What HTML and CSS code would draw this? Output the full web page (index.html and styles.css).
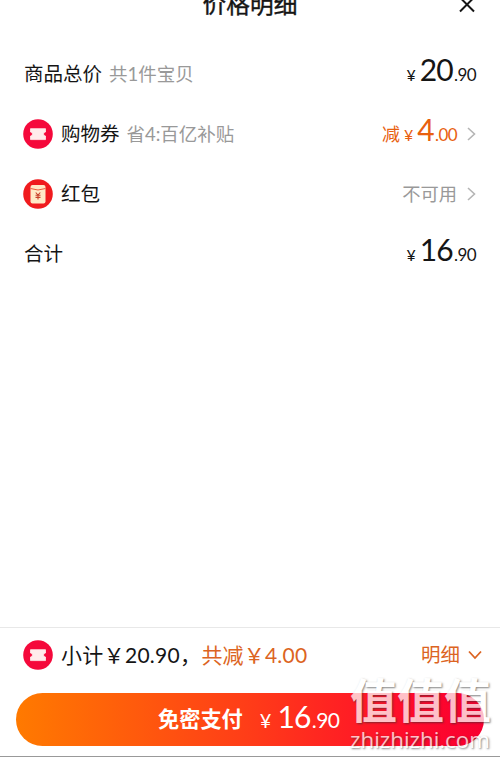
FILE: index.html
```html
<!DOCTYPE html>
<html lang="zh-CN">
<head>
  <meta charset="UTF-8">
  <meta name="viewport" content="width=device-width, initial-scale=1.0">
  <title>价格明细</title>
  <link rel="stylesheet" href="styles.css">
</head>
<body>
  <!-- Header -->
  <div class="header">
    <div class="header-title">价格明细</div>
    <svg class="close" viewBox="0 0 16 16"><path d="M1 0.5L15 14.5M15 0.5L1 14.5"/></svg>
  </div>

  <!-- Price rows -->
  <div class="rows">
    <div class="row">
      <span class="label">商品总价</span>
      <span class="note">共1件宝贝</span>
      <div class="price"><span class="yen">¥</span><span class="num">20</span><span class="dec">.90</span></div>
    </div>
    <div class="row">
      <svg class="icon" viewBox="0 0 30 30">
        <circle cx="15" cy="15" r="14.8" fill="#f5093b"/>
        <path d="M7.500 9.700H22.500V13A2 2 0 0 0 22.500 17V20.600H7.500V17A2 2 0 0 0 7.500 13Z" fill="#ffeceb" stroke="#ffeceb" stroke-width="0.8" stroke-linejoin="round"/>
      </svg>
      <span class="label">购物券</span>
      <span class="note">省4:百亿补贴</span>
      <div class="price orange"><span class="cut">减</span><span class="yen">¥</span><span class="num">4</span><span class="dec">.00</span></div>
      <svg class="arrow" viewBox="0 0 9 14"><path d="M1 1L7.500 7L1 13"/></svg>
    </div>
    <div class="row">
      <svg class="icon" viewBox="0 0 30 30">
        <circle cx="15" cy="15" r="14.8" fill="#f01b1e"/>
        <rect x="7.500" y="6" width="15" height="18.500" rx="2" fill="#ffe9c6"/>
        <path d="M7.500 9.500Q15 12.500 22.500 9.500" fill="none" stroke="#ee5a3c" stroke-width="1"/>
        <path d="M12.700 13.500L15 16L17.300 13.500M15 16V20.500M12.500 16.300H17.500M12.500 18.400H17.500" fill="none" stroke="#c9402a" stroke-width="1.100"/>
      </svg>
      <span class="label">红包</span>
      <span class="disabled">不可用</span>
      <svg class="arrow" viewBox="0 0 9 14"><path d="M1 1L7.500 7L1 13"/></svg>
    </div>
    <div class="row">
      <span class="label">合计</span>
      <div class="price"><span class="yen">¥</span><span class="num">16</span><span class="dec">.90</span></div>
    </div>
  </div>

  <!-- Bottom bar -->
  <div class="footer">
    <div class="subtotal">
      <svg class="icon" viewBox="0 0 30 30">
        <circle cx="15" cy="15" r="14.8" fill="#f5093b"/>
        <path d="M7.500 9.700H22.500V13A2 2 0 0 0 22.500 17V20.600H7.500V17A2 2 0 0 0 7.500 13Z" fill="#ffeceb" stroke="#ffeceb" stroke-width="0.8" stroke-linejoin="round"/>
      </svg>
      <span class="sum">小计￥20.90，</span>
      <span class="saved">共减￥4.00</span>
      <span class="detail">明细</span>
      <svg class="down" viewBox="0 0 14 10"><path d="M1 1.500L7 8L13 1.500"/></svg>
    </div>
    <div class="pay">
      <span class="pay-text">免密支付</span>
      <div class="pay-price"><span class="yen">¥</span><span class="num">16</span><span class="dec">.90</span></div>
    </div>
  </div>

  <div class="watermark">
    <div class="mark-name">值值值</div>
    <div class="mark-url">zhizhizhi.com</div>
  </div>
</body>
</html>
```
FILE: styles.css
```css
* {
  box-sizing: border-box;
}

body {
  position: relative;
  display: flex;
  flex-direction: column;
  width: 500px;
  height: 757px;
  margin: 0;
  overflow: hidden;
  background-color: #fff;
  border-bottom: 1px solid #999;
  color: #151515;
  font-family: Lato, "Noto Sans CJK SC", sans-serif;
  white-space: nowrap;
}

svg {
  display: block;
  flex-shrink: 0;
}

/* Header */
.header {
  display: flex;
  justify-content: flex-end;
  height: 44px;
  padding-right: 25px;
}

.header-title {
  flex: 1;
  padding-left: 41px;
  text-align: center;
  font-size: 23.7px;
  line-height: 8px;
  -webkit-text-stroke: 0.4px #151515;
}

.close {
  width: 16px;
  height: 16px;
  margin-top: -3px;
  fill: none;
  stroke: #151515;
  stroke-width: 2;
}

/* Price rows */
.rows {
  flex: 1;
}

.row {
  display: flex;
  align-items: center;
  height: 60px;
  padding: 0 24px;
}

.icon {
  width: 30px;
  height: 30px;
  margin-right: 8px;
  margin-left: -1px;
}

.label,
.note,
.disabled {
  padding-bottom: 3px;
}

.label {
  font-size: 19.5px;
}

.note {
  margin-left: 7px;
  color: #999;
  font-size: 18.5px;
}

.price {
  display: flex;
  align-items: baseline;
  margin-left: auto;
  padding-bottom: 4px;
  line-height: 30px;
}

.orange {
  color: #e8600f;
}

.cut {
  margin-right: 4px;
  font-size: 18px;
}

.yen {
  margin-right: 4px;
  font-size: 16px;
}

.num {
  font-size: 30px;
  letter-spacing: -0.7px;
}

.dec {
  margin-left: 1px;
  font-size: 17px;
  letter-spacing: -0.6px;
}

.disabled {
  margin-left: auto;
  color: #999;
  font-size: 18.3px;
}

.arrow {
  width: 9px;
  height: 14px;
  margin-left: 10px;
  fill: none;
  stroke: #b5b5b5;
  stroke-width: 1.6;
}

/* Bottom bar */
.footer {
  height: 129px;
  border-top: 1px solid #e8e8e8;
}

.subtotal {
  display: flex;
  align-items: center;
  height: 54px;
  padding: 0 18px 0 24px;
  font-size: 21px;
}

.sum,
.saved,
.detail {
  padding-bottom: 3px;
}

.sum {
  letter-spacing: 0.3px;
}

.saved,
.detail {
  color: #dc6422;
}

.saved {
  letter-spacing: 0.2px;
}

.detail {
  margin-left: auto;
  font-size: 19.5px;
}

.down {
  width: 14px;
  height: 10px;
  margin-left: 8px;
  fill: none;
  stroke: #dc6422;
  stroke-width: 1.8;
}

/* Pay button */
.pay {
  display: flex;
  align-items: center;
  width: 468px;
  height: 53px;
  margin: 11px 0 0 16px;
  padding: 0 0 4px 142px;
  border-radius: 27px;
  background: linear-gradient(90deg, #ff7a00, #ff3c18 50%, #ff0a2c 85%, #f80030);
  color: #fff;
}

.pay-text {
  font-size: 21.2px;
  font-weight: 700;
}

.pay-price {
  display: flex;
  align-items: baseline;
  margin-left: 17px;
  line-height: 30px;
}

.pay-price .yen {
  margin-right: 6px;
  font-size: 20px;
}

.pay-price .dec {
  font-size: 21px;
}

/* Watermark over the pay button */
.watermark {
  position: absolute;
  right: 8px;
  bottom: 4px;
  width: 142px;
  color: #fff;
  text-shadow: 1px 1px 2px rgba(50, 50, 50, 0.8);
  opacity: 0.74;
}

.mark-name {
  font-size: 47px;
  font-weight: 700;
  line-height: 54px;
}

.mark-url {
  font-family: "Open Sans", sans-serif;
  font-size: 22.3px;
  line-height: 25px;
}
```
